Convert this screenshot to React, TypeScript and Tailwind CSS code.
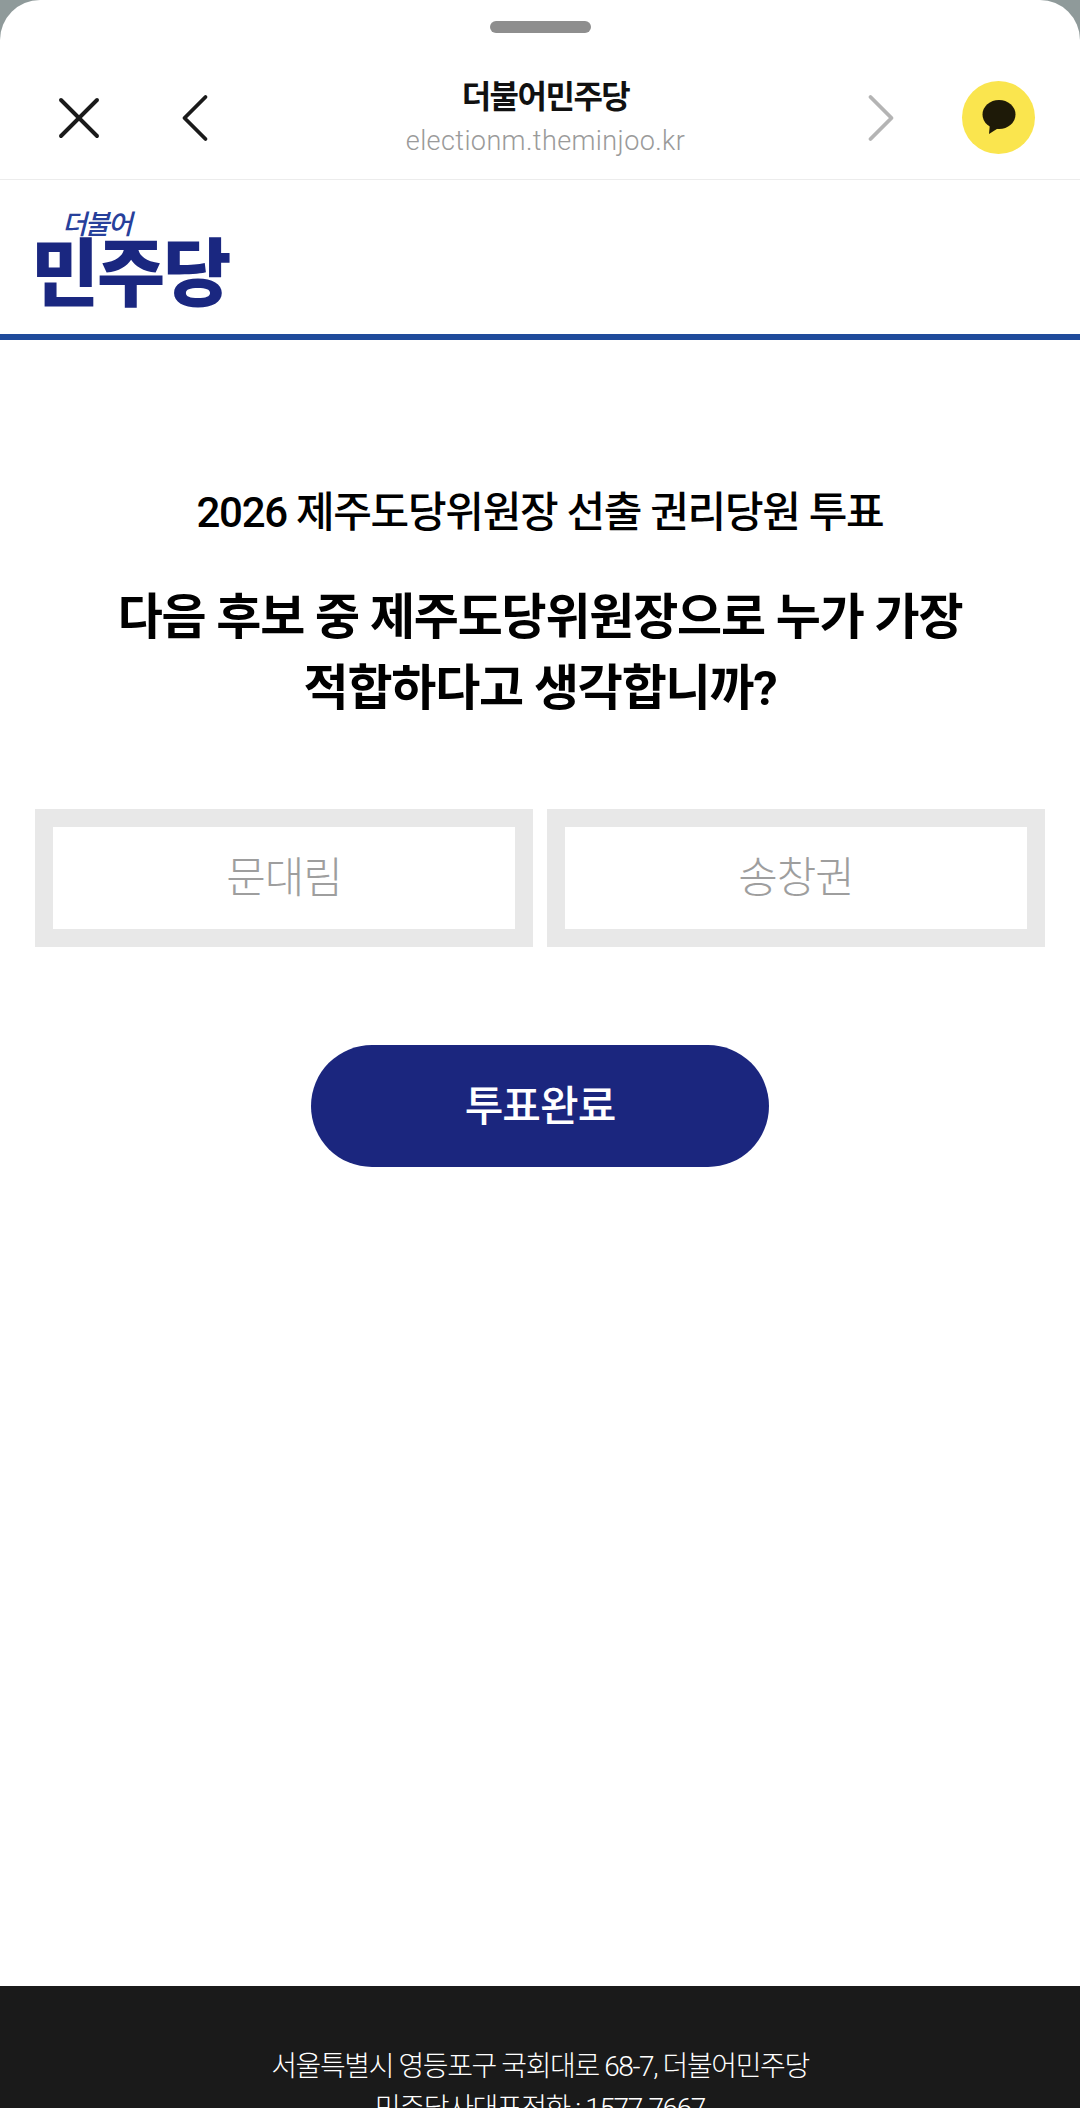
import { X, ChevronLeft, ChevronRight } from "lucide-react";

const kr = "font-['Roboto','Noto_Sans_CJK_KR',sans-serif]";

const CANDIDATES = ["문대림", "송창권"];

const KakaoBubble = () => (
  <svg width="34" height="35" viewBox="0 0 34 35" aria-hidden="true">
    <ellipse cx="17" cy="14.5" rx="16.5" ry="14.5" fill="#1e1a08" />
    <path d="M8 23 L7 34 L18 27 Z" fill="#1e1a08" />
  </svg>
);

const BrowserBar = () => (
  <div className="relative">
    <div className="flex justify-center pt-[21px]">
      <div className="w-[101px] h-[12px] rounded-full bg-[#8e8e8e]" />
    </div>
    <div className="flex items-center h-[147px] pt-[23px] pl-[43px] pr-[45px] border-b border-[#ececec]">
      <X className="w-[72px] h-[72px] text-[#1a1a1a]" strokeWidth={1.3} />
      <ChevronLeft className="w-[84px] h-[84px] ml-[38px] text-[#1a1a1a]" strokeWidth={1.1} />
      <div className="flex-1 flex flex-col items-center pl-[15px] mt-[2px]">
        <div className={`${kr} text-[32px] leading-[44px] font-bold tracking-[-1.5px] text-[#111]`}>더불어민주당</div>
        <div className={`${kr} text-[27px] leading-[44px] font-light text-[#9a9a9a] tracking-[0.4px]`}>electionm.theminjoo.kr</div>
      </div>
      <ChevronRight className="w-[84px] h-[84px] text-[#b4b4b4]" strokeWidth={1.1} />
      <div className="w-[73px] h-[73px] ml-[39px] rounded-full bg-[#fae54e] flex items-center justify-center">
        <KakaoBubble />
      </div>
    </div>
  </div>
);

const Logo = () => (
  <div className="flex flex-col items-start pl-[31px] h-[160px] border-b-[6px] border-[#1f4b9b]">
    <div className={`${kr} mt-[30px] ml-[31px] text-[27px] leading-[30px] font-medium italic text-[#27409b] tracking-[-2px]`}>더불어</div>
    <div className={`${kr} mt-[4px] text-[74px] leading-[62px] font-black text-[#1a2780] tracking-[-2px]`}>민주당</div>
  </div>
);

export default function App() {
  return (
    <div className={`${kr} w-[1080px] h-[2108px] overflow-hidden bg-[#8f9a9a]`}>
      <div className="h-full bg-white rounded-t-[40px] flex flex-col">
        <BrowserBar />
        <Logo />
        <main className="flex-1 flex flex-col items-center">
          <h2 className="mt-[145px] text-[42px] leading-[56px] font-medium tracking-[-1.3px] text-black">
            2026 제주도당위원장 선출 권리당원 투표
          </h2>
          <h1 className="mt-[41px] w-full text-center text-[49px] leading-[71px] font-bold tracking-[-1.2px] text-black">
            다음 후보 중 제주도당위원장으로 누가 가장
            <br />
            적합하다고 생각합니까?
          </h1>
          <div className="mt-[85px] w-full px-[35px] grid grid-cols-2 gap-[14px]">
            {CANDIDATES.map((name) => (
              <div
                key={name}
                className="h-[138px] border-[18px] border-[#e8e8e8] flex items-center justify-center text-[43px] font-light tracking-[-1px] text-[#9e9e9e]"
              >
                {name}
              </div>
            ))}
          </div>
          <button className="mt-[98px] w-[458px] h-[122px] rounded-full bg-[#1b267e] text-white text-[42px] font-medium tracking-[-1px]">
            투표완료
          </button>
        </main>
        <footer className="h-[122px] bg-[#1a1a1a] pt-[60px] text-center text-[28px] leading-[42px] font-light tracking-[-1.4px] text-white">
          서울특별시 영등포구 국회대로 68-7, 더불어민주당
          <br />
          민주당사대표전화 : 1577-7667
        </footer>
      </div>
    </div>
  );
}
